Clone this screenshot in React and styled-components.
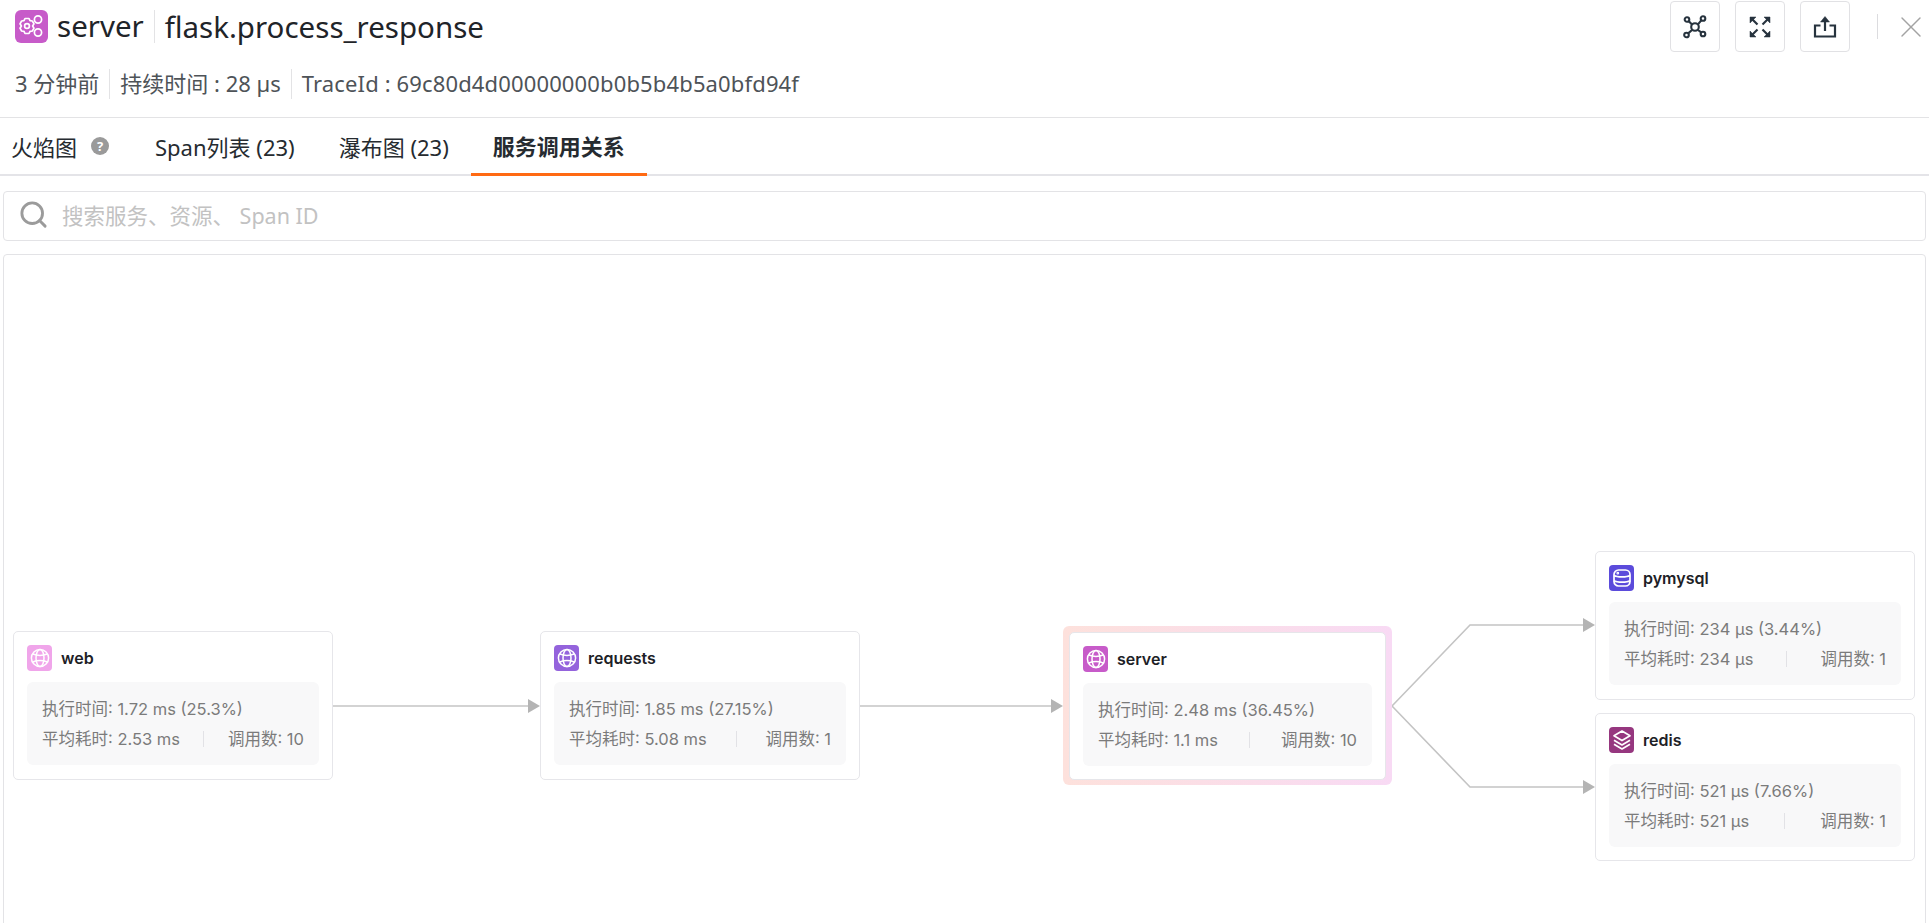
import React from "react";
import styled, { createGlobalStyle } from "styled-components";
import { Search, X } from "lucide-react";

const GlobalStyle = createGlobalStyle`
  html, body {
    margin: 0;
    padding: 0;
    background: #fff;
    font-family: "Noto Sans", "Noto Sans CJK SC", sans-serif;
    color: #23282d;
  }
  * { box-sizing: border-box; }
`;

const Page = styled.div`
  width: 1929px;
  height: 923px;
  overflow: hidden;
  background: #fff;
`;

const Header = styled.header`
  height: 118px;
  padding-top: 1px;
  border-bottom: 1px solid #e3e3e5;
`;

const TitleRow = styled.div`
  height: 51px;
  padding-left: 15px;
  display: flex;
  align-items: center;
  justify-content: space-between;
`;

const Title = styled.div`
  display: flex;
  align-items: center;
  font-size: 29.5px;
  line-height: 36px;
  color: #1f2429;
`;

const ServiceBadge = styled.span`
  width: 33px;
  height: 33px;
  border-radius: 6px;
  background: #c75bc9;
  display: flex;
  margin-right: 9px;
`;

const TitleName = styled.span`
  padding-right: 10px;
  margin-right: 10px;
  border-right: 1px solid #e3e3e5;
  height: 33px;
  line-height: 31px;
`;

const Actions = styled.div`
  display: flex;
  align-items: center;
  gap: 15px;
`;

const ActionButton = styled.button`
  width: 50px;
  height: 51px;
  padding: 0;
  background: #fff;
  border: 1px solid #e1e1e4;
  border-radius: 4px;
  display: flex;
  align-items: center;
  justify-content: center;
`;

const CloseWrap = styled.div`
  margin-left: 12px;
  padding-left: 15px;
  border-left: 1px solid #dcdcdf;
  height: 25px;
  display: flex;
  align-items: center;
  color: #a3a3a3;
`;

const MetaRow = styled.div`
  margin-top: 17px;
  padding-left: 15px;
  display: flex;
  align-items: center;
  font-size: 22px;
  line-height: 30px;
  color: #4e5358;
`;

const MetaItem = styled.span`
  padding-right: 10px;
  margin-right: 10px;
  border-right: ${(p) => (p.$last ? "none" : "1px solid #e3e3e5")};
  letter-spacing: ${(p) => (p.$last ? "0.14px" : "0")};
  height: 30px;
  line-height: 29px;
`;

const Tabs = styled.nav`
  height: 58px;
  display: flex;
  border-bottom: 2px solid #e4e4e8;
`;

const Tab = styled.div`
  height: 58px;
  padding: ${(p) => (p.$first ? "0 24px 2px 11px" : "0 22px 2px")};
  display: flex;
  align-items: center;
  gap: 14px;
  font-size: 22px;
  font-weight: ${(p) => (p.$active ? 700 : 400)};
  color: #262b30;
  border-bottom: ${(p) => (p.$active ? "3px solid #ff6a13" : "none")};
`;

const HelpDot = styled.span`
  width: 18px;
  height: 18px;
  border-radius: 50%;
  background: #9a9a9a;
  color: #fff;
  font-size: 13px;
  font-weight: 700;
  display: flex;
  align-items: center;
  justify-content: center;
`;

const SearchBar = styled.div`
  height: 50px;
  margin: 15px 3px 13px 3px;
  padding: 0 0 3px 14px;
  border: 1px solid #e3e3e6;
  border-radius: 4px;
  display: flex;
  align-items: center;
  gap: 13px;
  font-size: 21.5px;
  color: #c2c2c2;
`;

const Canvas = styled.section`
  position: relative;
  height: 720px;
  margin: 0 3px;
  border: 1px solid #e3e3e6;
  border-radius: 4px;
`;

const Edges = styled.svg`
  position: absolute;
  left: -4px;
  top: -255px;
  width: 1929px;
  height: 923px;
  pointer-events: none;
`;

const NodeBox = styled.div`
  position: absolute;
  display: flex;
  flex-direction: column;
  padding: ${(p) => (p.$active ? "6px" : 0)};
  border-radius: 6px;
  background: ${(p) => (p.$active ? "linear-gradient(90deg, #fde1dc, #f8daf4)" : "transparent")};
`;

const NodeCard = styled.div`
  flex: 1;
  padding: 13px;
  background: #fff;
  border: 1.5px solid #e6e6ea;
  border-radius: 5px;
  display: flex;
  flex-direction: column;
  gap: 11px;
  font-family: Inter, "Noto Sans CJK SC", sans-serif;
`;

const NodeHead = styled.div`
  display: flex;
  align-items: center;
  gap: 9px;
  height: 26px;
  font-size: 16px;
  font-weight: 600;
  color: #1d2126;
`;

const NodeIcon = styled.span`
  width: 25px;
  height: 26px;
  border-radius: 4px;
  background: ${(p) => p.$color};
  color: #fff;
  display: flex;
  align-items: center;
  justify-content: center;
`;

const Stats = styled.div`
  height: 83px;
  padding: 1px 15px 0;
  background: #f8f8f9;
  border-radius: 6px;
  display: flex;
  flex-direction: column;
  justify-content: center;
  gap: 9px;
  font-size: 16.5px;
  line-height: 21px;
  color: #7b7b7b;
`;

const StatRow = styled.div`
  display: flex;
  align-items: center;
  justify-content: space-between;
  white-space: nowrap;
`;

const StatDivider = styled.span`
  width: 1px;
  height: 16px;
  background: #e2e2e6;
`;

const GearIcon = () => (
  <svg width="33" height="33" viewBox="0 0 33 33" fill="none" stroke="#fff" strokeWidth="1.7" strokeLinejoin="round">
    <path d="M10 8.5h4l1 2.2 2.4.3 1.6 2.8-1.4 2.2 1.4 2.2-1.6 2.8-2.4.3-1 2.2h-4l-1-2.2-2.4-.3L5 18.2l1.4-2.2L5 13.8 6.6 11l2.4-.3z" />
    <circle cx="12" cy="16" r="2.4" />
    <circle cx="23" cy="9.5" r="3.6" />
    <circle cx="23" cy="22.5" r="3.6" />
  </svg>
);

const NetworkIcon = () => (
  <svg width="24" height="24" viewBox="0 0 24 24" fill="none" stroke="#27333e" strokeWidth="2.1">
    <circle cx="12" cy="12" r="3.8" />
    <circle cx="4" cy="4.5" r="2.3" />
    <circle cx="20" cy="3.5" r="2.3" />
    <circle cx="3.5" cy="20" r="2.3" />
    <circle cx="20" cy="19" r="2.3" />
    <path d="M5.8 6.2L9 9.4M18.4 5.2L15 9.4M5.2 18.4L9 15M18.2 17.4L15 15" />
  </svg>
);

const ExpandIcon = () => (
  <svg width="22" height="22" viewBox="0 0 22 22" fill="#27333e" stroke="#27333e" strokeWidth="2.2">
    <path d="M8.5 8.5L3 3" fill="none" />
    <path d="M13.5 8.5L19 3" fill="none" />
    <path d="M8.5 13.5L3 19" fill="none" />
    <path d="M13.5 13.5L19 19" fill="none" />
    <path d="M1 7V1h6z" strokeWidth="0.5" />
    <path d="M21 7V1h-6z" strokeWidth="0.5" />
    <path d="M1 15v6h6z" strokeWidth="0.5" />
    <path d="M21 15v6h-6z" strokeWidth="0.5" />
  </svg>
);

const ShareIcon = () => (
  <svg width="24" height="24" viewBox="0 0 24 24" fill="none" stroke="#27333e" strokeWidth="2.2">
    <path d="M7.5 10.5H2v11h20v-11h-5.5" />
    <path d="M12 16V3" />
    <path d="M7.5 7L12 1.5 16.5 7z" fill="#27333e" strokeWidth="0.5" />
  </svg>
);

const GlobeIcon = () => (
  <svg width="20" height="20" viewBox="0 0 20 20" fill="none" stroke="#fff" strokeWidth="1.5">
    <circle cx="10" cy="10" r="8.6" />
    <ellipse cx="10" cy="10" rx="4" ry="8.6" />
    <path d="M2.8 6c4 1.6 10.4 1.6 14.4 0M2.8 14c4-1.6 10.4-1.6 14.4 0" />
  </svg>
);

const DbIcon = () => (
  <svg width="20" height="20" viewBox="0 0 20 20" fill="none" stroke="#fff" strokeWidth="1.7">
    <rect x="2" y="2" width="16" height="16" rx="4.5" />
    <path d="M2 7.5c3 1.8 13 1.8 16 0M2 12.8c3 1.8 13 1.8 16 0" />
    <circle cx="5.8" cy="5.2" r="0.5" fill="#fff" />
  </svg>
);

const LayersIcon = () => (
  <svg width="20" height="22" viewBox="0 0 20 22" fill="none" stroke="#fff" strokeWidth="1.7" strokeLinejoin="round">
    <path d="M10 2L18 6.8 10 11.6 2 6.8z" />
    <path d="M2 11.2L10 16 18 11.2" />
    <path d="M2 15.2L10 20 18 15.2" />
  </svg>
);

const nodes = [
  { name: "web", x: 9, y: 376, w: 320, h: 149, color: "#f0a5ea", icon: "globe", run: "1.72 ms (25.3%)", avg: "2.53 ms", calls: 10 },
  { name: "requests", x: 536, y: 376, w: 320, h: 149, color: "#9463dc", icon: "globe", run: "1.85 ms (27.15%)", avg: "5.08 ms", calls: 1 },
  { name: "server", x: 1059, y: 371, w: 329, h: 159, color: "#c75bc9", icon: "globe", active: true, run: "2.48 ms (36.45%)", avg: "1.1 ms", calls: 10 },
  { name: "pymysql", x: 1591, y: 296, w: 320, h: 149, color: "#5b4bdb", icon: "db", run: "234 µs (3.44%)", avg: "234 µs", calls: 1 },
  { name: "redis", x: 1591, y: 458, w: 320, h: 148, color: "#96377f", icon: "layers", run: "521 µs (7.66%)", avg: "521 µs", calls: 1 },
];

const icons = {
  globe: <GlobeIcon />,
  db: <DbIcon />,
  layers: <LayersIcon />,
};

const edges = [
  "M332 706H530",
  "M860 706H1053",
  "M1392 706L1470 625H1585",
  "M1392 706L1470 787H1585",
];

const arrows = [
  "M528 699L540 706L528 713z",
  "M1051 699L1063 706L1051 713z",
  "M1583 618L1595 625L1583 632z",
  "M1583 780L1595 787L1583 794z",
];

const App = () => {
  return (
    <Page>
      <GlobalStyle />
      <Header>
        <TitleRow>
          <Title>
            <ServiceBadge>
              <GearIcon />
            </ServiceBadge>
            <TitleName>server</TitleName>
            <span>flask.process_response</span>
          </Title>
          <Actions>
            <ActionButton><NetworkIcon /></ActionButton>
            <ActionButton><ExpandIcon /></ActionButton>
            <ActionButton><ShareIcon /></ActionButton>
            <CloseWrap>
              <X size={36} strokeWidth={0.95} />
            </CloseWrap>
          </Actions>
        </TitleRow>
        <MetaRow>
          <MetaItem>3 分钟前</MetaItem>
          <MetaItem>持续时间 : 28 µs</MetaItem>
          <MetaItem $last>TraceId : 69c80d4d00000000b0b5b4b5a0bfd94f</MetaItem>
        </MetaRow>
      </Header>
      <Tabs>
        <Tab $first>
          火焰图
          <HelpDot>?</HelpDot>
        </Tab>
        <Tab>Span列表 (23)</Tab>
        <Tab>瀑布图 (23)</Tab>
        <Tab $active>服务调用关系</Tab>
      </Tabs>
      <SearchBar>
        <Search size={31} color="#9b9b9b" strokeWidth={2.2} />
        搜索服务、资源、 Span ID
      </SearchBar>
      <Canvas>
        <Edges viewBox="0 0 1929 923">
          {edges.map((d) => (
            <path key={d} d={d} fill="none" stroke="#c4c4c4" strokeWidth="1.6" />
          ))}
          {arrows.map((d) => (
            <path key={d} d={d} fill="#b4b4b4" />
          ))}
        </Edges>
        {nodes.map((n) => (
          <NodeBox
            key={n.name}
            $active={n.active}
            style={{ left: n.x, top: n.y, width: n.w, height: n.h }}
          >
            <NodeCard>
              <NodeHead>
                <NodeIcon $color={n.color}>{icons[n.icon]}</NodeIcon>
                {n.name}
              </NodeHead>
              <Stats>
                <StatRow>
                  <span>执行时间: {n.run}</span>
                </StatRow>
                <StatRow>
                  <span>平均耗时: {n.avg}</span>
                  <StatDivider />
                  <span>调用数: {n.calls}</span>
                </StatRow>
              </Stats>
            </NodeCard>
          </NodeBox>
        ))}
      </Canvas>
    </Page>
  );
};

export default App;
